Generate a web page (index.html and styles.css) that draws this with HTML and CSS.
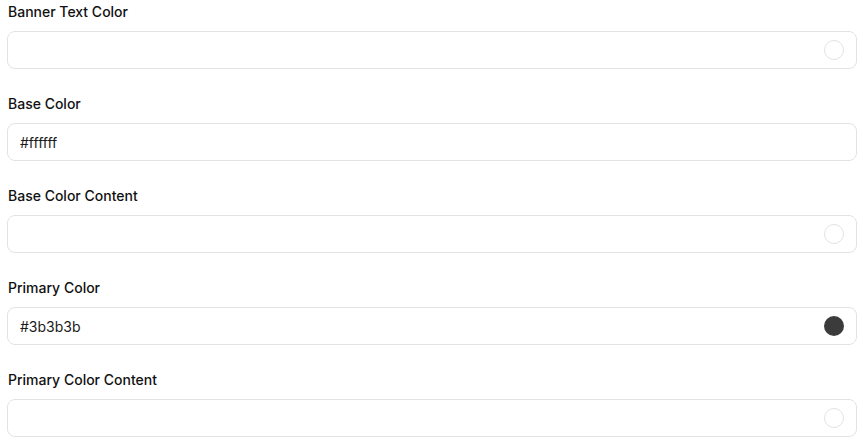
FILE: index.html
```html
<!DOCTYPE html>
<html lang="en">

<head>
    <meta charset="UTF-8">
    <meta name="viewport" content="width=device-width, initial-scale=1.0">
    <title>Theme Colors</title>
    <link rel="stylesheet" href="styles.css">
</head>

<body>
    <div class="fields">
        <div class="field">
            <label class="field-label">Banner Text Color</label>
            <div class="color-input">
                <span class="value"></span>
                <span class="swatch empty"></span>
            </div>
        </div>
        <div class="field">
            <label class="field-label">Base Color</label>
            <div class="color-input">
                <span class="value">#ffffff</span>
            </div>
        </div>
        <div class="field">
            <label class="field-label">Base Color Content</label>
            <div class="color-input">
                <span class="value"></span>
                <span class="swatch empty"></span>
            </div>
        </div>
        <div class="field">
            <label class="field-label">Primary Color</label>
            <div class="color-input">
                <span class="value">#3b3b3b</span>
                <span class="swatch" style="background-color: #3b3b3b;"></span>
            </div>
        </div>
        <div class="field">
            <label class="field-label">Primary Color Content</label>
            <div class="color-input">
                <span class="value"></span>
                <span class="swatch empty"></span>
            </div>
        </div>
    </div>
</body>

</html>
```

FILE: styles.css
```css
body {
    margin: 0;
    padding: 0;
    background-color: #ffffff;
    font-family: Inter, "Noto Sans", sans-serif;
    color: #111111;
}

.fields {
    display: flex;
    flex-direction: column;
    gap: 25px;
    padding: 2px 9px 0 7px;
}

.field {
    display: flex;
    flex-direction: column;
    gap: 9px;
}

.field-label {
    font-size: 14px;
    font-weight: 500;
    line-height: 20px;
    padding-left: 1px;
}

/* input box with the colour dot on the right */
.color-input {
    display: flex;
    align-items: center;
    justify-content: space-between;
    height: 38px;
    box-sizing: border-box;
    border: 1px solid #e3e3e3;
    border-radius: 8px;
    padding: 0 12px 0 12px;
    font-size: 14px;
}

.value {
    color: #1a1a1a;
}

.swatch {
    width: 20px;
    height: 20px;
    border-radius: 50%;
    box-sizing: border-box;
}

.swatch.empty {
    border: 1px solid #e3e3e3;
    background-color: #ffffff;
}
```
